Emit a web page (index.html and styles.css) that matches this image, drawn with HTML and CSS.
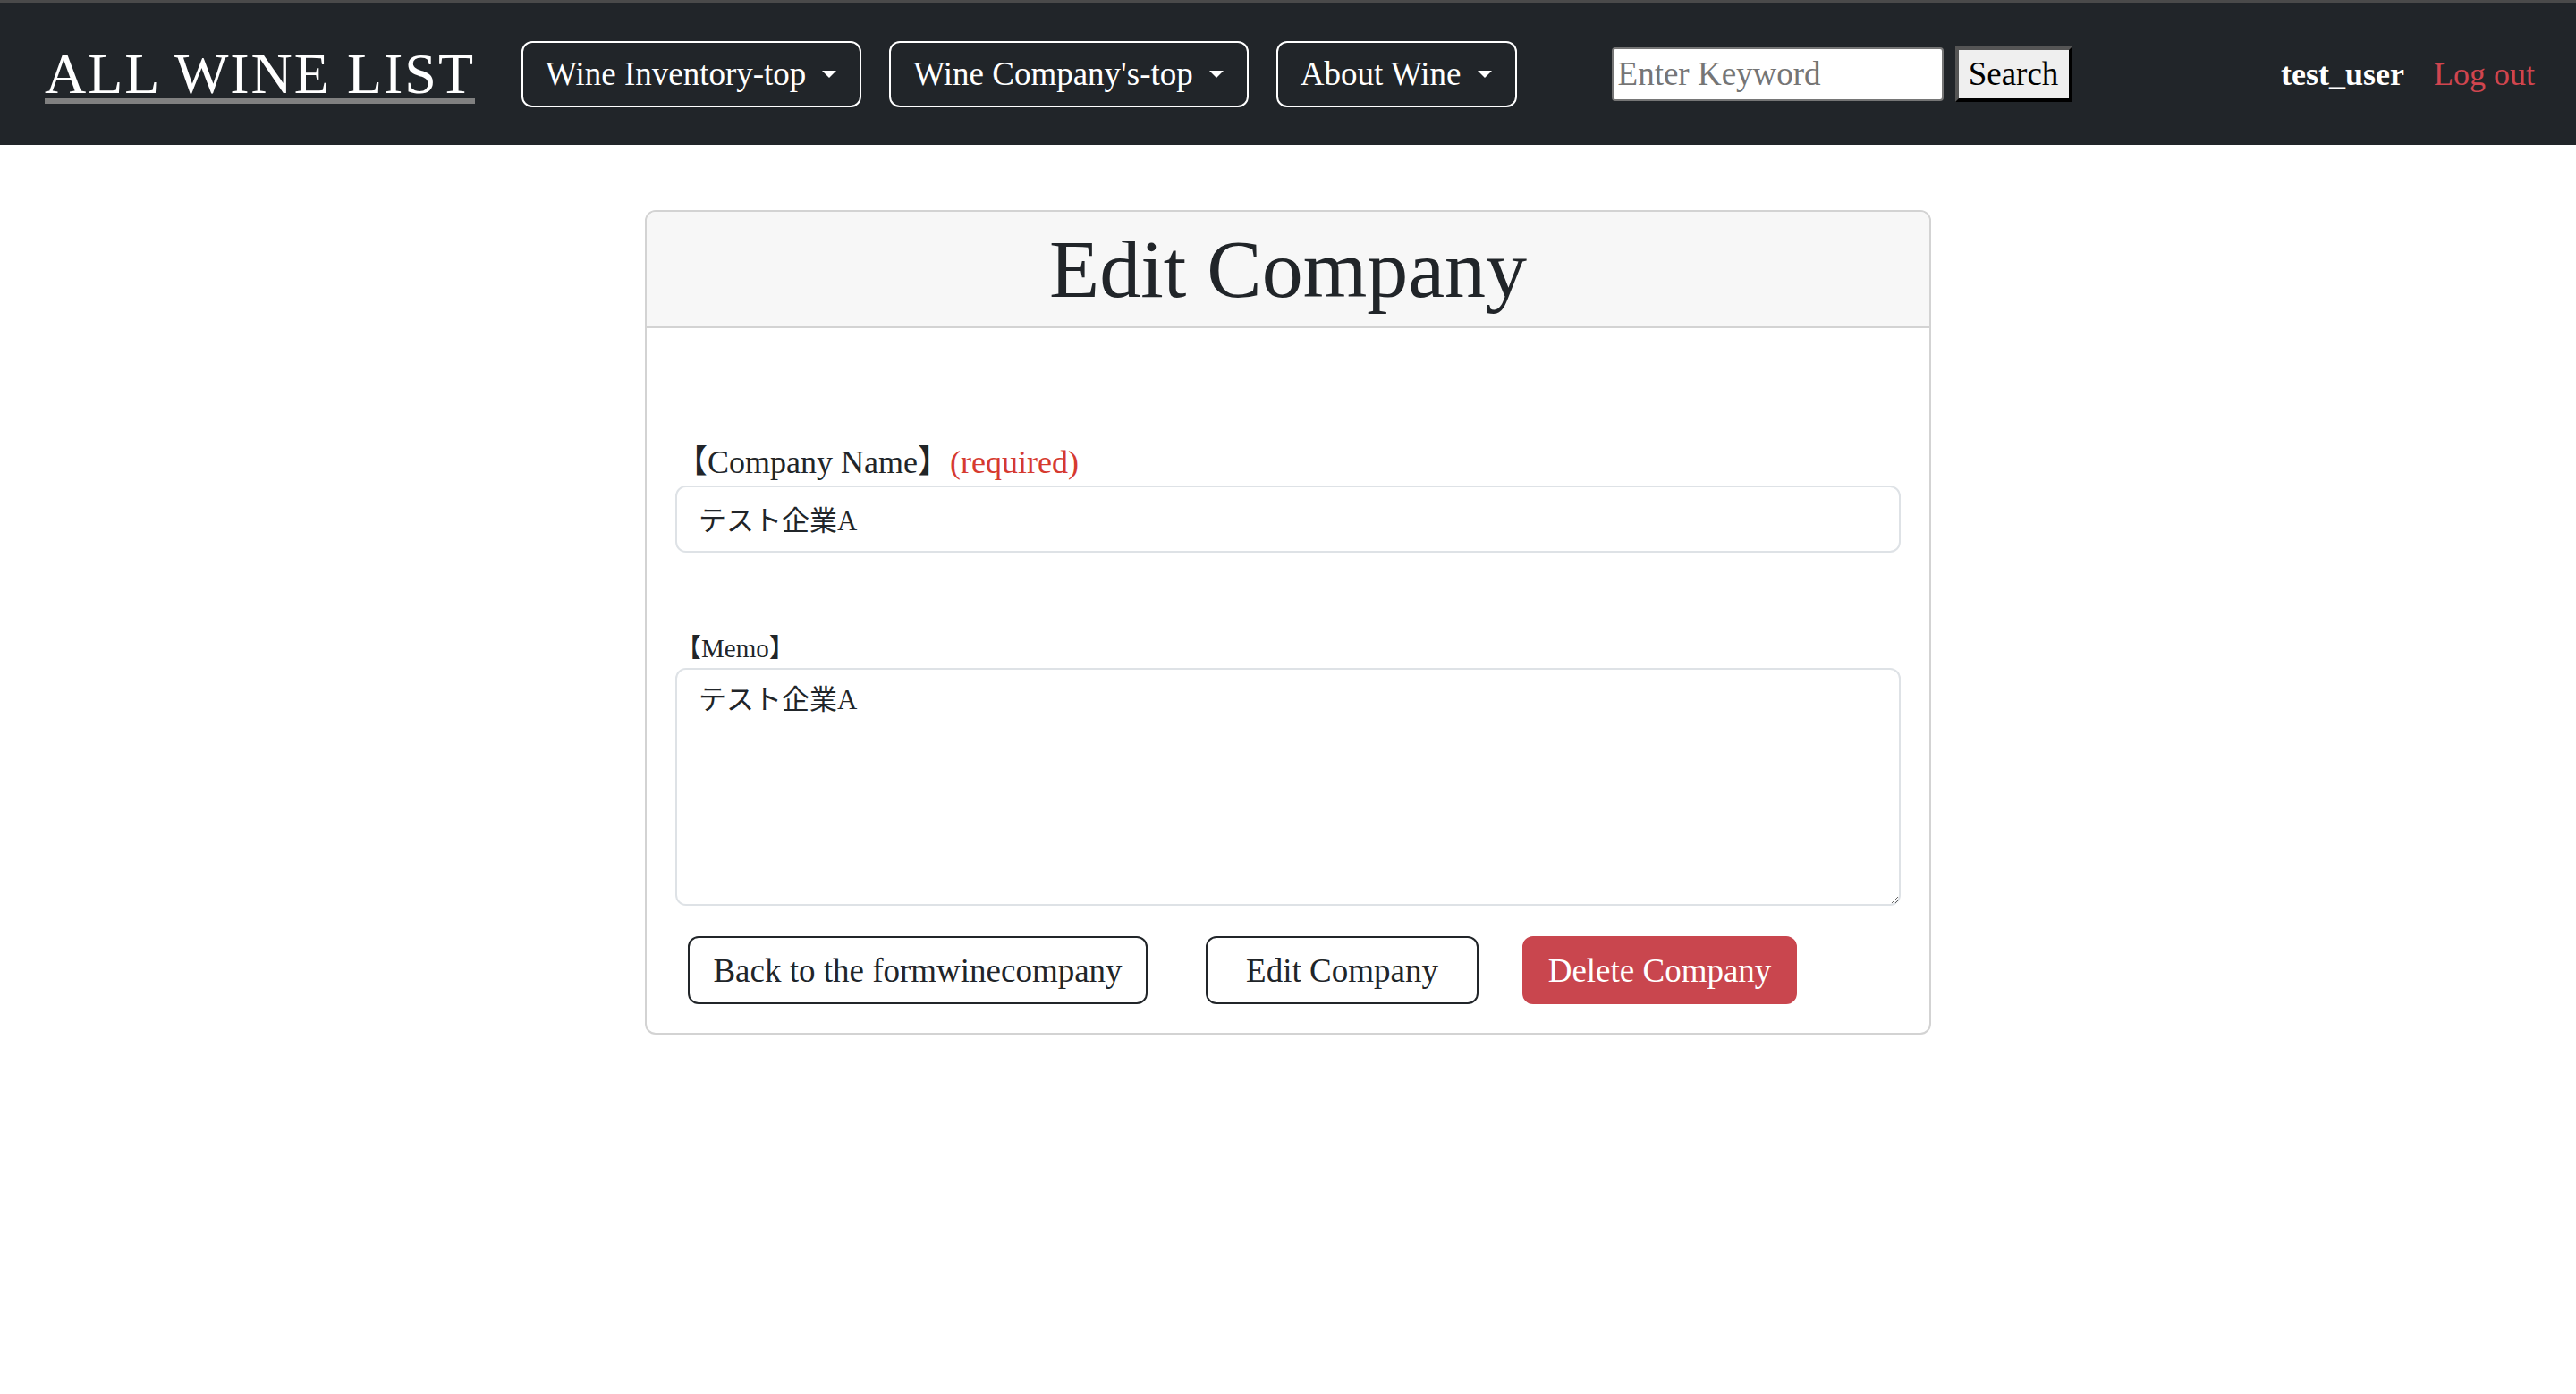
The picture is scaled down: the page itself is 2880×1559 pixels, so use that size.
FILE: index.html
```html
<!DOCTYPE html>
<html lang="ja">
<head>
<meta charset="utf-8">
<title>Edit Company</title>
<link rel="stylesheet" href="styles.css">
</head>
<body>
<header class="navbar">
  <a class="brand" href="#">ALL WINE LIST</a>
  <nav class="nav-menu">
    <button class="nav-btn">Wine Inventory-top<span class="caret"></span></button>
    <button class="nav-btn">Wine Company's-top<span class="caret"></span></button>
    <button class="nav-btn">About Wine<span class="caret"></span></button>
  </nav>
  <form class="search">
    <input class="search-input" type="text" placeholder="Enter Keyword">
    <button class="search-btn" type="button">Search</button>
  </form>
  <div class="user">
    <span class="user-name">test_user</span>
    <a class="logout" href="#">Log out</a>
  </div>
</header>

<main class="page">
  <section class="card">
    <div class="card-header">
      <h1 class="card-title">Edit Company</h1>
    </div>
    <form class="card-body">
      <div class="field field-name">
        <label class="label">【Company Name】<span class="required">(required)</span></label>
        <input class="control" type="text" value="テスト企業A">
      </div>
      <div class="field field-memo">
        <label class="label label-small">【Memo】</label>
        <textarea class="control control-area">テスト企業A</textarea>
      </div>
      <div class="actions">
        <button class="btn btn-outline btn-back" type="button">Back to the formwinecompany</button>
        <button class="btn btn-outline btn-edit" type="button">Edit Company</button>
        <button class="btn btn-danger btn-delete" type="button">Delete Company</button>
      </div>
    </form>
  </section>
</main>
</body>
</html>
```

FILE: styles.css
```css
html, body {
  margin: 0;
  padding: 0;
  background: #ffffff;
}

body {
  font-family: "Liberation Serif", "Noto Sans CJK JP", serif;
  color: #212529;
}

/* ---------- navbar ---------- */
.navbar {
  display: flex;
  align-items: center;
  height: 159px;
  border-top: 3px solid #4a4a4a;
  background: #212529;
  padding: 0 46px 0 50px;
}

.brand {
  font-size: 64px;
  letter-spacing: 2px;
  color: #ffffff;
  text-decoration: underline;
  text-decoration-color: #808080;
  text-decoration-thickness: 6px;
  text-underline-offset: 6px;
  margin-right: 52px;
  line-height: 1;
  white-space: nowrap;
}

.nav-menu {
  display: flex;
  gap: 31px;
}

.nav-btn {
  display: flex;
  align-items: center;
  height: 74px;
  padding: 0 26px 0 25px;
  border: 2px solid #ffffff;
  border-radius: 12px;
  background: transparent;
  color: #ffffff;
  font-family: "Liberation Serif", serif;
  font-size: 37px;
  white-space: nowrap;
}

.caret {
  display: inline-block;
  width: 0;
  height: 0;
  margin-left: 18px;
  border-top: 8px solid #ffffff;
  border-left: 8px solid transparent;
  border-right: 8px solid transparent;
}

.search {
  display: flex;
  align-items: center;
  gap: 13px;
  margin: 0 0 0 106px;
}

.search-input {
  box-sizing: border-box;
  width: 371px;
  height: 60px;
  padding: 0 5px;
  border: 2px solid #767676;
  border-radius: 4px;
  background: #ffffff;
  font-family: "Liberation Serif", serif;
  font-size: 37px;
  color: #000000;
}

.search-input::placeholder {
  color: #757575;
}

.search-btn {
  box-sizing: border-box;
  width: 131px;
  height: 62px;
  padding: 0;
  border-style: solid;
  border-width: 4px;
  border-color: #555555 #000000 #000000 #555555;
  background: #efefef;
  color: #000000;
  font-family: "Liberation Serif", serif;
  font-size: 37px;
}

.user {
  display: flex;
  align-items: center;
  margin-left: auto;
  gap: 33px;
  font-size: 36px;
}

.user-name {
  color: #ffffff;
  font-weight: 700;
}

.logout {
  color: #d0454f;
  text-decoration: none;
}

/* ---------- page ---------- */
.page {
  display: flex;
  justify-content: center;
  padding-top: 73px;
}

.card {
  box-sizing: border-box;
  width: 1438px;
  border: 2px solid #d3d3d3;
  border-radius: 12px;
  overflow: hidden;
}

.card-header {
  display: flex;
  align-items: center;
  justify-content: center;
  height: 128px;
  background: #f7f7f7;
  border-bottom: 2px solid #d3d3d3;
}

.card-title {
  margin: 0;
  font-size: 92px;
  font-weight: 400;
  line-height: 1;
  color: #212529;
}

.card-body {
  display: flex;
  flex-direction: column;
  padding: 32px;
}

.field {
  display: flex;
  flex-direction: column;
}

.field-name {
  margin-top: 92px;
}

.field-memo {
  margin-top: 85px;
}

.label {
  font-size: 36px;
  line-height: 52px;
  color: #212529;
}

.label-small {
  font-size: 29px;
  line-height: 44px;
}

.required {
  color: #d63a2f;
}

.control {
  box-sizing: border-box;
  width: 100%;
  height: 75px;
  padding: 11px 24px 13px;
  border: 2px solid #dee2e6;
  border-radius: 12px;
  background: #ffffff;
  font-family: "Liberation Serif", "Noto Sans CJK JP", serif;
  font-size: 31px;
  line-height: 46px;
  color: #212529;
}

.control-area {
  height: 266px;
  resize: vertical;
}

.actions {
  display: flex;
  align-items: center;
  margin-top: 34px;
  padding-left: 14px;
}

.btn {
  box-sizing: border-box;
  height: 76px;
  padding: 0 20px;
  border-radius: 12px;
  font-family: "Liberation Serif", serif;
  font-size: 37px;
  white-space: nowrap;
}

.btn-outline {
  border: 2px solid #212529;
  background: #ffffff;
  color: #212529;
}

.btn-danger {
  border: 2px solid #c9464e;
  background: #c9464e;
  color: #ffffff;
}

.btn-back {
  width: 514px;
}

.btn-edit {
  width: 305px;
  margin-left: 65px;
}

.btn-delete {
  width: 307px;
  margin-left: 49px;
}
```
